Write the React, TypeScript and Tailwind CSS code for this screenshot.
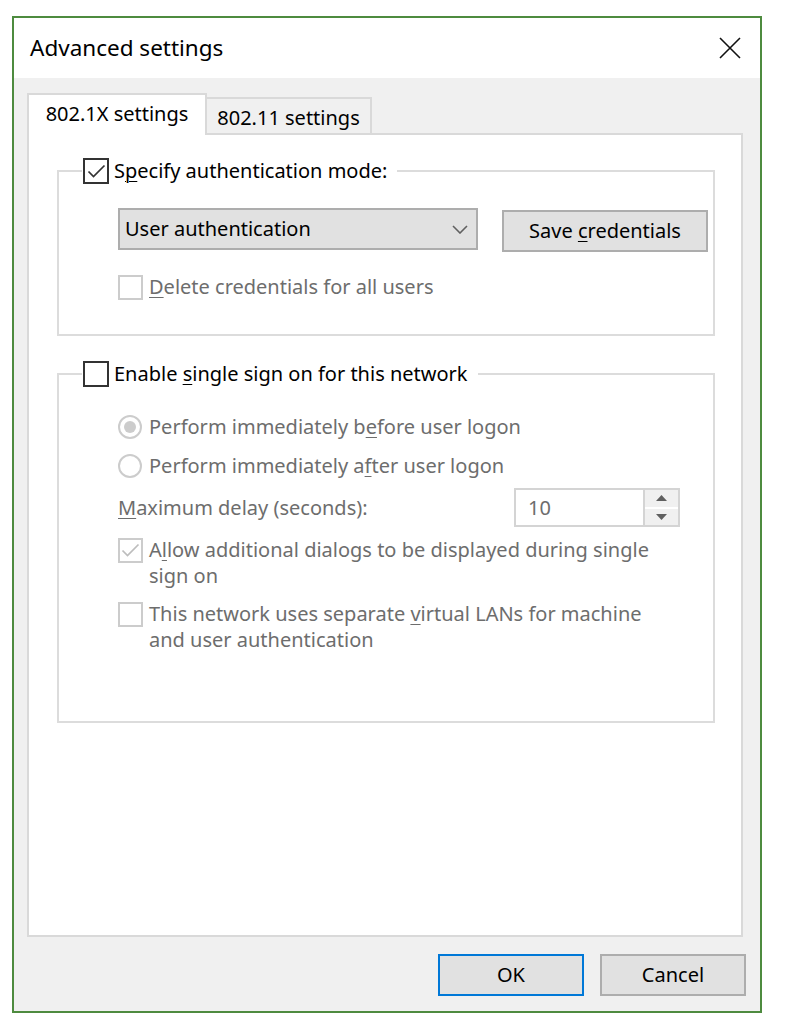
import React from "react";

type BoxProps = { checked?: boolean; disabled?: boolean };

// Win10-style checkbox square
const CheckBox = ({ checked, disabled }: BoxProps) => (
  <span
    className={
      disabled
        ? "flex h-[25px] w-[25px] shrink-0 items-center justify-center border-2 border-[#cccccc] bg-white"
        : "flex h-[26px] w-[26px] shrink-0 items-center justify-center border-2 border-[#333333] bg-white"
    }
  >
    {checked && (
      <svg width="19" height="15" viewBox="0 0 19 15" fill="none">
        <path
          d="M1.5 7.5 L6.5 12.5 L17.5 1.5"
          stroke={disabled ? "#bdbdbd" : "#333333"}
          strokeWidth="1.7"
        />
      </svg>
    )}
  </span>
);

const Radio = ({ selected }: { selected?: boolean }) => (
  <span className="flex h-[24px] w-[24px] shrink-0 items-center justify-center rounded-full border-2 border-[#cccccc] bg-white">
    {selected && <span className="h-[12px] w-[12px] rounded-full bg-[#cccccc]" />}
  </span>
);

// access key underline
const K = ({ children }: { children: React.ReactNode }) => (
  <span className="underline decoration-1 underline-offset-[3px]">{children}</span>
);

const Chevron = () => (
  <svg width="16" height="9" viewBox="0 0 16 9" fill="none">
    <path d="M1 1 L8 8 L15 1" stroke="#606060" strokeWidth="1.6" />
  </svg>
);

const SpinBox = () => (
  <div className="flex h-[39px] w-[166px] border-2 border-[#d4d4d4] bg-white">
    <div className="flex flex-1 items-center pl-[12px] text-[#6d6d6d]">10</div>
    <div className="flex w-[35px] flex-col border-l-2 border-[#d4d4d4] bg-[#f0f0f0]">
      <div className="flex flex-1 items-center justify-center border-b border-white">
        <svg width="11" height="6" viewBox="0 0 11 6">
          <path d="M0 6 L5.5 0 L11 6 Z" fill="#606060" />
        </svg>
      </div>
      <div className="flex flex-1 items-center justify-center border-t border-white">
        <svg width="11" height="6" viewBox="0 0 11 6">
          <path d="M0 0 L11 0 L5.5 6 Z" fill="#606060" />
        </svg>
      </div>
    </div>
  </div>
);

export default function App() {
  return (
    <div className="h-[1032px] w-[792px] bg-white pl-[12px] pt-[16px] font-['Noto_Sans','Liberation_Sans',sans-serif] text-[20px] leading-[26px] text-black">
      <div className="flex h-[997px] w-[750px] flex-col border-2 border-[#4e8b3f] bg-[#f0f0f0]">
        {/* title bar */}
        <div className="flex h-[60px] items-center justify-between bg-white pl-[16px] pr-[19px]">
          <span className="text-[22.5px]">Advanced settings</span>
          <svg width="22" height="22" viewBox="0 0 22 22" fill="none">
            <path d="M1 1 L21 21 M21 1 L1 21" stroke="#111111" strokeWidth="1.6" />
          </svg>
        </div>

        <div className="flex flex-1 flex-col pl-[13px] pr-[14px] pt-[15px]">
          {/* tabs */}
          <div className="flex items-end">
            <div className="relative z-10 -mb-[2px] flex h-[42px] w-[180px] items-center justify-center border-2 border-b-0 border-[#d9d9d9] bg-white pb-[2px]">
              802.1X settings
            </div>
            <div className="flex h-[36px] w-[165px] items-center justify-center border-2 border-b-0 border-l-0 border-[#d9d9d9] bg-[#f0f0f0] pt-[4px]">
              802.11 settings
            </div>
          </div>

          {/* tab page */}
          <div className="mr-[3px] h-[804px] border-2 border-[#d9d9d9] bg-white pl-[28px] pr-[26px] pt-[23px]">
            <fieldset className="border-2 border-[#dcdcdc]">
              <legend className="ml-[23px] pl-[1px] pr-[10px]">
                <span className="flex h-[26px] items-center gap-[5px]">
                  <CheckBox checked />
                  <span>
                    S<K>p</K>ecify authentication mode:
                  </span>
                </span>
              </legend>
              <div className="pb-[34px] pl-[59px] pt-[24px]">
                <div className="flex items-start gap-[24px]">
                  <div className="flex h-[42px] w-[360px] items-center justify-between border-2 border-[#adadad] bg-[#e1e1e1] pl-[5px] pr-[8px]">
                    <span>User authentication</span>
                    <Chevron />
                  </div>
                  <div className="mt-[2px] flex h-[42px] w-[206px] items-center justify-center border-2 border-[#adadad] bg-[#e1e1e1]">
                    <span>
                      Save <K>c</K>redentials
                    </span>
                  </div>
                </div>
                <div className="mt-[22px] flex h-[26px] items-center gap-[6px] text-[#6d6d6d]">
                  <CheckBox disabled />
                  <span>
                    <K>D</K>elete credentials for all users
                  </span>
                </div>
              </div>
            </fieldset>

            <fieldset className="mt-[25px] border-2 border-[#dcdcdc]">
              <legend className="ml-[23px] pl-[1px] pr-[10px]">
                <span className="flex h-[26px] items-center gap-[5px]">
                  <CheckBox />
                  <span>
                    Enable <K>s</K>ingle sign on for this network
                  </span>
                </span>
              </legend>
              <div className="pb-[68px] pl-[59px] pt-[27px] text-[#6d6d6d]">
                <div className="flex h-[26px] items-center gap-[7px]">
                  <Radio selected />
                  <span>
                    Perform immediately b<K>e</K>fore user logon
                  </span>
                </div>
                <div className="mt-[13px] flex h-[26px] items-center gap-[7px]">
                  <Radio />
                  <span>
                    Perform immediately a<K>f</K>ter user logon
                  </span>
                </div>
                <div className="mt-[9px] flex h-[39px] items-center">
                  <span className="w-[396px]">
                    <K>M</K>aximum delay (seconds):
                  </span>
                  <SpinBox />
                </div>
                <div className="mt-[10px] flex items-start gap-[6px]">
                  <span className="mt-[1px]">
                    <CheckBox checked disabled />
                  </span>
                  <span className="whitespace-nowrap">
                    A<K>l</K>low additional dialogs to be displayed during single
                    <br />
                    sign on
                  </span>
                </div>
                <div className="mt-[12px] flex items-start gap-[6px]">
                  <span className="mt-[1px]">
                    <CheckBox disabled />
                  </span>
                  <span className="whitespace-nowrap">
                    This network uses separate <K>v</K>irtual LANs for machine
                    <br />
                    and user authentication
                  </span>
                </div>
              </div>
            </fieldset>
          </div>

          {/* dialog buttons */}
          <div className="mt-[17px] flex justify-end gap-[16px]">
            <div className="flex h-[42px] w-[146px] items-center justify-center border-2 border-[#0078d7] bg-[#e1e1e1]">
              OK
            </div>
            <div className="flex h-[42px] w-[146px] items-center justify-center border-2 border-[#adadad] bg-[#e1e1e1]">
              Cancel
            </div>
          </div>
        </div>
      </div>
    </div>
  );
}
